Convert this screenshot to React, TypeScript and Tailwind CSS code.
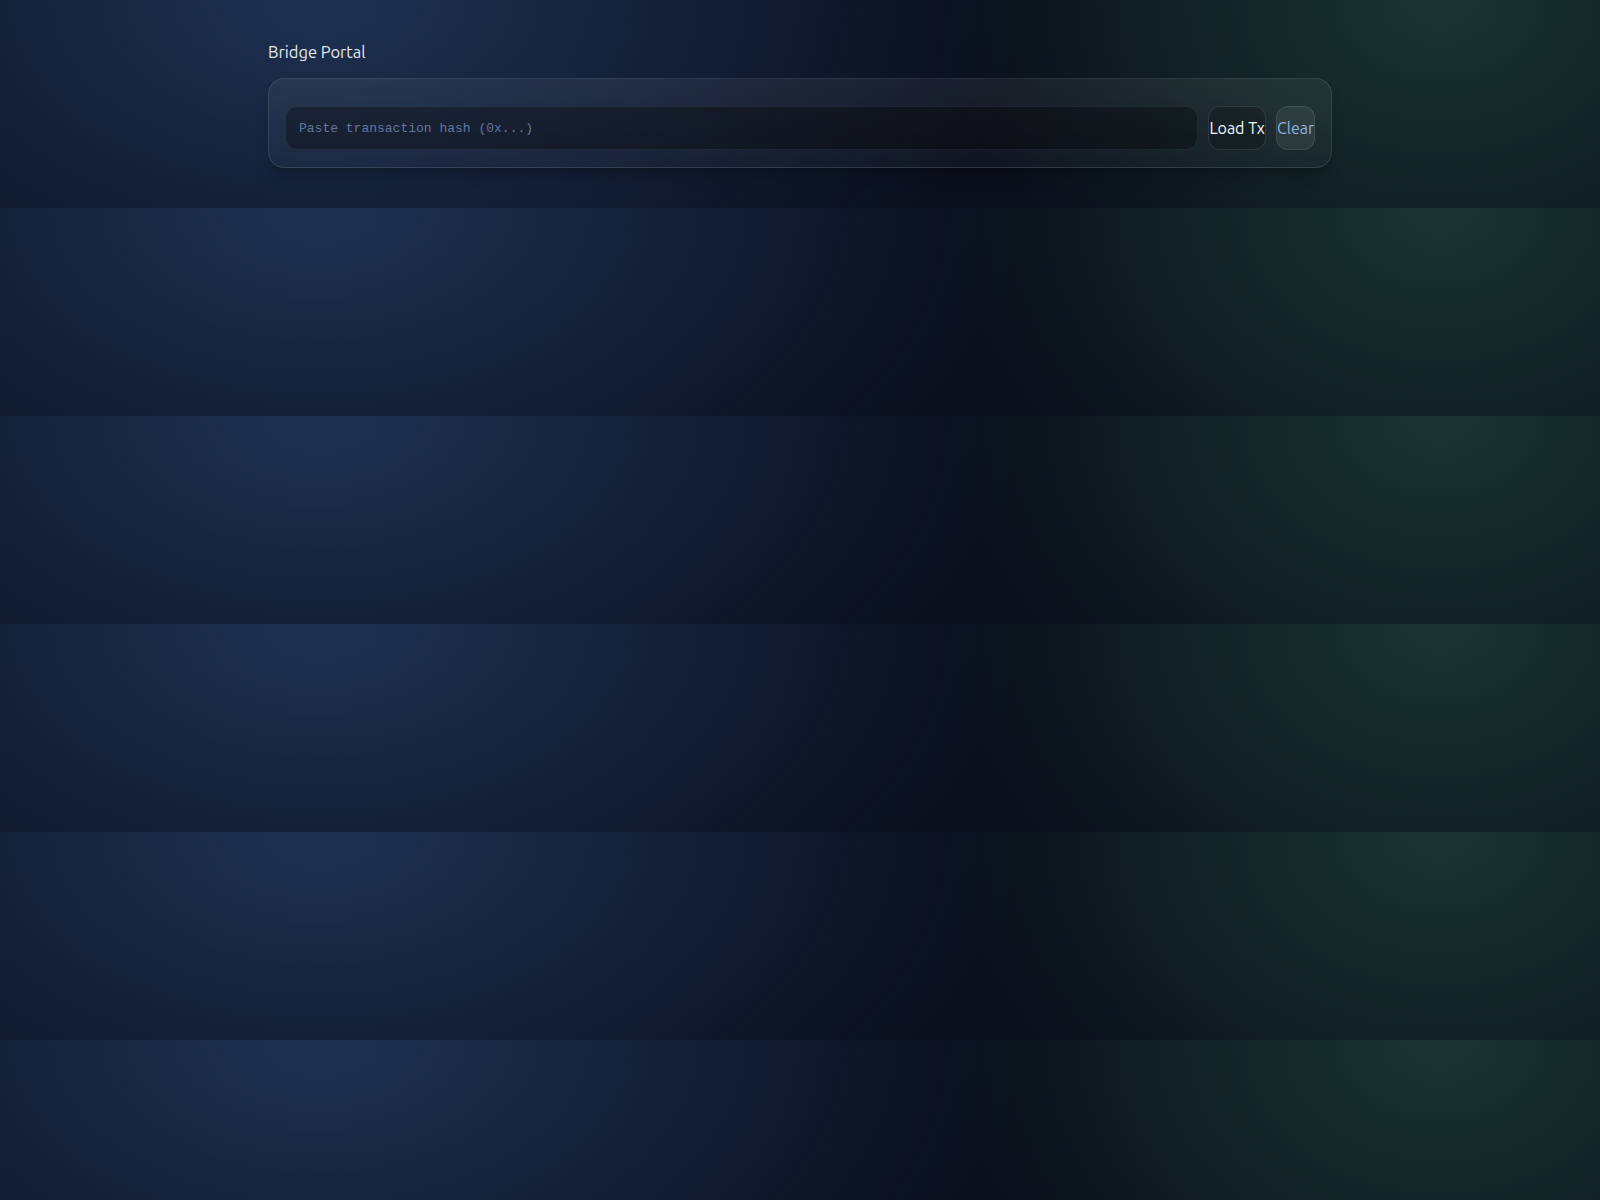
import React, { useState } from "react";

export default function App() {
  const [hash, setHash] = useState("");

  return (
    <div className="min-h-screen w-full bg-[#0a0f1c] bg-[radial-gradient(ellipse_700px_420px_at_20%_0%,#1e3152,transparent),radial-gradient(ellipse_490px_380px_at_90%_0%,#1a3530,transparent)] bg-[length:100%_208px] bg-repeat-y font-['Ubuntu','Noto_Sans',sans-serif]">
      <div className="mx-auto w-[1064px] pt-[40px]">
        <h1 className="mb-[13px] text-[16.5px] leading-[25px] text-slate-200">
          Bridge Portal
        </h1>

        <div className="flex gap-[10px] rounded-2xl border border-white/10 bg-gradient-to-b from-white/[0.06] to-white/[0.03] px-4 pt-[27px] pb-[17px] shadow-lg shadow-black/20">
          <input
            value={hash}
            onChange={(e) => setHash(e.target.value)}
            placeholder="Paste transaction hash (0x...)"
            className="h-[44px] flex-1 rounded-xl border border-white/[0.07] bg-black/30 px-[13px] font-mono text-[13px] text-slate-200 outline-none placeholder:text-[#64759c]"
          />
          <button className="rounded-xl border border-white/10 bg-black/20 px-0 text-[16px] text-slate-100">
            Load Tx
          </button>
          <button
            onClick={() => setHash("")}
            className="rounded-xl border border-white/10 bg-white/[0.07] px-0 text-[16px] text-[#90b2e0]"
          >
            Clear
          </button>
        </div>
      </div>
    </div>
  );
}
